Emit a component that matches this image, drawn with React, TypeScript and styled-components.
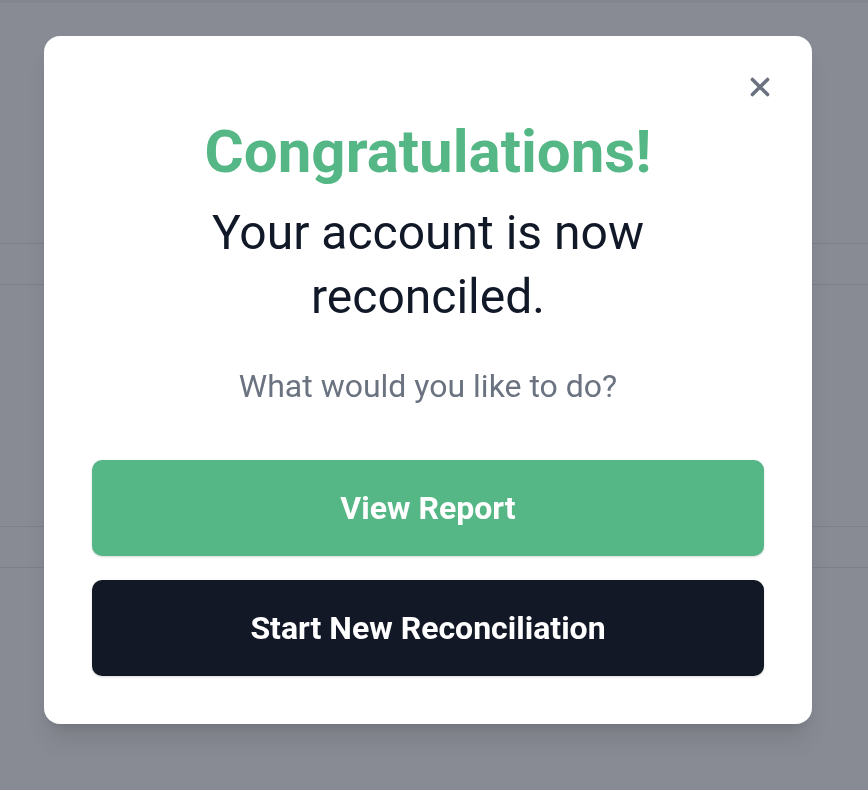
import React from 'react'
import styled, { createGlobalStyle } from 'styled-components'

const GlobalStyle = createGlobalStyle`
  html, body {
    margin: 0;
    padding: 0;
    height: 100%;
  }
  body {
    font-family: Roboto, "Liberation Sans", Arial, sans-serif;
    background: #ffffff;
  }
`

const Page = styled.div`
  height: 790px;
  overflow: hidden;
  display: flex;
  flex-direction: column;
`

const TopStrip = styled.div`
  height: 3px;
  background: #f3f4f6;
`

const Spacer = styled.div<{ $h: number }>`
  height: ${p => p.$h}px;
`

const Row = styled.div`
  height: 40px;
  border-top: 1px solid #e5e7eb;
  border-bottom: 1px solid #e5e7eb;
  background: #ffffff;
`

const Overlay = styled.div`
  position: fixed;
  inset: 0;
  background: rgba(17, 24, 39, 0.5);
  display: flex;
  justify-content: flex-start;
  align-items: flex-start;
  padding: 36px 0 0 44px;
`

const Modal = styled.div`
  position: relative;
  width: 768px;
  box-sizing: border-box;
  background: #ffffff;
  border-radius: 16px;
  box-shadow: 0 20px 25px -5px rgba(0, 0, 0, 0.1), 0 8px 10px -6px rgba(0, 0, 0, 0.1);
  padding: 80px 48px 48px;
  display: flex;
  flex-direction: column;
  align-items: center;
`

const CloseButton = styled.button`
  position: absolute;
  top: 35px;
  right: 36px;
  width: 32px;
  height: 32px;
  padding: 0;
  border: none;
  background: transparent;
  color: #6b7280;
  display: flex;
  align-items: center;
  justify-content: center;
  cursor: pointer;
`

const Title = styled.h1`
  margin: 0;
  font-size: 60px;
  line-height: 72px;
  font-weight: 700;
  color: #55b785;
`

const Message = styled.p`
  margin: 13px 0 0;
  width: 520px;
  text-align: center;
  font-size: 48px;
  line-height: 64px;
  font-weight: 400;
  color: #111827;
`

const Question = styled.p`
  margin: 33px 0 0;
  font-size: 32px;
  line-height: 48px;
  color: #6b7280;
`

const Actions = styled.div`
  margin-top: 50px;
  width: 100%;
  display: flex;
  flex-direction: column;
  gap: 24px;
`

const ActionButton = styled.button<{ $variant: 'primary' | 'dark' }>`
  height: 96px;
  width: 100%;
  border: none;
  border-radius: 10px;
  background: ${p => (p.$variant === 'primary' ? '#55b785' : '#131827')};
  color: #ffffff;
  font-family: Roboto, "Liberation Sans", Arial, sans-serif;
  font-size: 32px;
  font-weight: 700;
  box-shadow: 0 1px 3px rgba(0, 0, 0, 0.1), 0 1px 2px rgba(0, 0, 0, 0.06);
  cursor: pointer;
`

const App: React.FC = () => {
  return (
    <>
      <GlobalStyle />
      <Page>
        <TopStrip />
        <Spacer $h={240} />
        <Row />
        <Spacer $h={241} />
        <Row />
      </Page>
      <Overlay>
        <Modal>
          <CloseButton aria-label="Close">
            <svg width="26" height="26" viewBox="0 0 24 24" fill="none" stroke="currentColor" strokeWidth="3.3" strokeLinecap="round">
              <path d="M5 5 L19 19 M19 5 L5 19" />
            </svg>
          </CloseButton>
          <Title>Congratulations!</Title>
          <Message>Your account is now reconciled.</Message>
          <Question>What would you like to do?</Question>
          <Actions>
            <ActionButton $variant="primary">View Report</ActionButton>
            <ActionButton $variant="dark">Start New Reconciliation</ActionButton>
          </Actions>
        </Modal>
      </Overlay>
    </>
  )
}

export default App
